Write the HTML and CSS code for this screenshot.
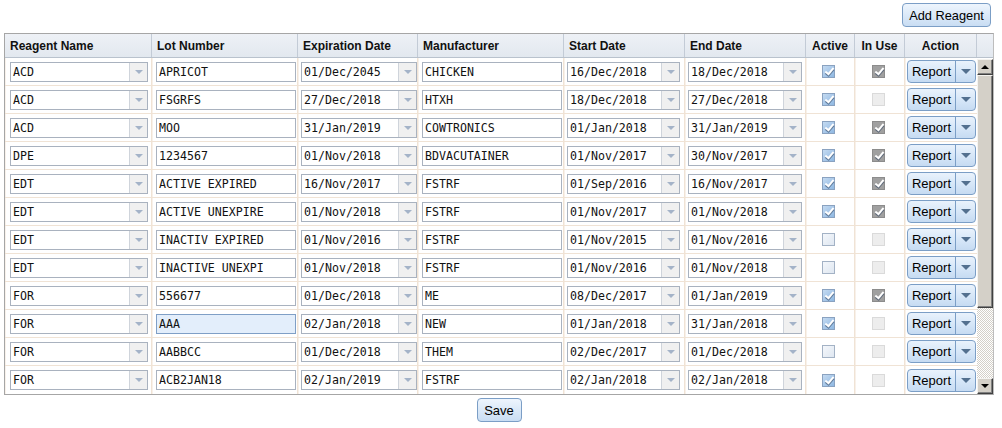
FILE: index.html
```html
<!DOCTYPE html>
<html lang="en">
<head>
  <meta charset="UTF-8">
  <title>Reagents</title>
  <link rel="stylesheet" href="styles.css">
</head>
<body>
  <div class="page">
    <div class="toolbar">
      <button class="btn">Add Reagent</button>
    </div>

    <div class="grid">
      <div class="grid-head">
        <div class="hcell">Reagent Name</div>
        <div class="hcell">Lot Number</div>
        <div class="hcell">Expiration Date</div>
        <div class="hcell">Manufacturer</div>
        <div class="hcell">Start Date</div>
        <div class="hcell">End Date</div>
        <div class="hcell center">Active</div>
        <div class="hcell center">In Use</div>
        <div class="hcell center">Action</div>
        <div class="hcell last"></div>
      </div>

      <div class="grid-body">
        <div class="rows">
          <div class="row">
            <div class="cell c1"><div class="combo"><span class="combo-text">ACD</span><span class="combo-btn"></span></div></div>
            <div class="cell c2"><div class="field">APRICOT</div></div>
            <div class="cell c3"><div class="combo"><span class="combo-text">01/Dec/2045</span><span class="combo-btn"></span></div></div>
            <div class="cell c4"><div class="field">CHICKEN</div></div>
            <div class="cell c5"><div class="combo"><span class="combo-text">16/Dec/2018</span><span class="combo-btn"></span></div></div>
            <div class="cell c6"><div class="combo"><span class="combo-text">18/Dec/2018</span><span class="combo-btn"></span></div></div>
            <div class="cell ccheck"><span class="check on"></span></div>
            <div class="cell ccheck"><span class="check locked on"></span></div>
            <div class="cell caction"><div class="split"><span class="split-main">Report</span><span class="split-arrow"></span></div></div>
          </div>
          <div class="row">
            <div class="cell c1"><div class="combo"><span class="combo-text">ACD</span><span class="combo-btn"></span></div></div>
            <div class="cell c2"><div class="field">FSGRFS</div></div>
            <div class="cell c3"><div class="combo"><span class="combo-text">27/Dec/2018</span><span class="combo-btn"></span></div></div>
            <div class="cell c4"><div class="field">HTXH</div></div>
            <div class="cell c5"><div class="combo"><span class="combo-text">18/Dec/2018</span><span class="combo-btn"></span></div></div>
            <div class="cell c6"><div class="combo"><span class="combo-text">27/Dec/2018</span><span class="combo-btn"></span></div></div>
            <div class="cell ccheck"><span class="check on"></span></div>
            <div class="cell ccheck"><span class="check locked"></span></div>
            <div class="cell caction"><div class="split"><span class="split-main">Report</span><span class="split-arrow"></span></div></div>
          </div>
          <div class="row">
            <div class="cell c1"><div class="combo"><span class="combo-text">ACD</span><span class="combo-btn"></span></div></div>
            <div class="cell c2"><div class="field">MOO</div></div>
            <div class="cell c3"><div class="combo"><span class="combo-text">31/Jan/2019</span><span class="combo-btn"></span></div></div>
            <div class="cell c4"><div class="field">COWTRONICS</div></div>
            <div class="cell c5"><div class="combo"><span class="combo-text">01/Jan/2018</span><span class="combo-btn"></span></div></div>
            <div class="cell c6"><div class="combo"><span class="combo-text">31/Jan/2019</span><span class="combo-btn"></span></div></div>
            <div class="cell ccheck"><span class="check on"></span></div>
            <div class="cell ccheck"><span class="check locked on"></span></div>
            <div class="cell caction"><div class="split"><span class="split-main">Report</span><span class="split-arrow"></span></div></div>
          </div>
          <div class="row">
            <div class="cell c1"><div class="combo"><span class="combo-text">DPE</span><span class="combo-btn"></span></div></div>
            <div class="cell c2"><div class="field">1234567</div></div>
            <div class="cell c3"><div class="combo"><span class="combo-text">01/Nov/2018</span><span class="combo-btn"></span></div></div>
            <div class="cell c4"><div class="field">BDVACUTAINER</div></div>
            <div class="cell c5"><div class="combo"><span class="combo-text">01/Nov/2017</span><span class="combo-btn"></span></div></div>
            <div class="cell c6"><div class="combo"><span class="combo-text">30/Nov/2017</span><span class="combo-btn"></span></div></div>
            <div class="cell ccheck"><span class="check on"></span></div>
            <div class="cell ccheck"><span class="check locked on"></span></div>
            <div class="cell caction"><div class="split"><span class="split-main">Report</span><span class="split-arrow"></span></div></div>
          </div>
          <div class="row">
            <div class="cell c1"><div class="combo"><span class="combo-text">EDT</span><span class="combo-btn"></span></div></div>
            <div class="cell c2"><div class="field">ACTIVE EXPIRED</div></div>
            <div class="cell c3"><div class="combo"><span class="combo-text">16/Nov/2017</span><span class="combo-btn"></span></div></div>
            <div class="cell c4"><div class="field">FSTRF</div></div>
            <div class="cell c5"><div class="combo"><span class="combo-text">01/Sep/2016</span><span class="combo-btn"></span></div></div>
            <div class="cell c6"><div class="combo"><span class="combo-text">16/Nov/2017</span><span class="combo-btn"></span></div></div>
            <div class="cell ccheck"><span class="check on"></span></div>
            <div class="cell ccheck"><span class="check locked on"></span></div>
            <div class="cell caction"><div class="split"><span class="split-main">Report</span><span class="split-arrow"></span></div></div>
          </div>
          <div class="row">
            <div class="cell c1"><div class="combo"><span class="combo-text">EDT</span><span class="combo-btn"></span></div></div>
            <div class="cell c2"><div class="field">ACTIVE UNEXPIRE</div></div>
            <div class="cell c3"><div class="combo"><span class="combo-text">01/Nov/2018</span><span class="combo-btn"></span></div></div>
            <div class="cell c4"><div class="field">FSTRF</div></div>
            <div class="cell c5"><div class="combo"><span class="combo-text">01/Nov/2017</span><span class="combo-btn"></span></div></div>
            <div class="cell c6"><div class="combo"><span class="combo-text">01/Nov/2018</span><span class="combo-btn"></span></div></div>
            <div class="cell ccheck"><span class="check on"></span></div>
            <div class="cell ccheck"><span class="check locked on"></span></div>
            <div class="cell caction"><div class="split"><span class="split-main">Report</span><span class="split-arrow"></span></div></div>
          </div>
          <div class="row">
            <div class="cell c1"><div class="combo"><span class="combo-text">EDT</span><span class="combo-btn"></span></div></div>
            <div class="cell c2"><div class="field">INACTIV EXPIRED</div></div>
            <div class="cell c3"><div class="combo"><span class="combo-text">01/Nov/2016</span><span class="combo-btn"></span></div></div>
            <div class="cell c4"><div class="field">FSTRF</div></div>
            <div class="cell c5"><div class="combo"><span class="combo-text">01/Nov/2015</span><span class="combo-btn"></span></div></div>
            <div class="cell c6"><div class="combo"><span class="combo-text">01/Nov/2016</span><span class="combo-btn"></span></div></div>
            <div class="cell ccheck"><span class="check"></span></div>
            <div class="cell ccheck"><span class="check locked"></span></div>
            <div class="cell caction"><div class="split"><span class="split-main">Report</span><span class="split-arrow"></span></div></div>
          </div>
          <div class="row">
            <div class="cell c1"><div class="combo"><span class="combo-text">EDT</span><span class="combo-btn"></span></div></div>
            <div class="cell c2"><div class="field">INACTIVE UNEXPI</div></div>
            <div class="cell c3"><div class="combo"><span class="combo-text">01/Nov/2018</span><span class="combo-btn"></span></div></div>
            <div class="cell c4"><div class="field">FSTRF</div></div>
            <div class="cell c5"><div class="combo"><span class="combo-text">01/Nov/2016</span><span class="combo-btn"></span></div></div>
            <div class="cell c6"><div class="combo"><span class="combo-text">01/Nov/2018</span><span class="combo-btn"></span></div></div>
            <div class="cell ccheck"><span class="check"></span></div>
            <div class="cell ccheck"><span class="check locked"></span></div>
            <div class="cell caction"><div class="split"><span class="split-main">Report</span><span class="split-arrow"></span></div></div>
          </div>
          <div class="row">
            <div class="cell c1"><div class="combo"><span class="combo-text">FOR</span><span class="combo-btn"></span></div></div>
            <div class="cell c2"><div class="field">556677</div></div>
            <div class="cell c3"><div class="combo"><span class="combo-text">01/Dec/2018</span><span class="combo-btn"></span></div></div>
            <div class="cell c4"><div class="field">ME</div></div>
            <div class="cell c5"><div class="combo"><span class="combo-text">08/Dec/2017</span><span class="combo-btn"></span></div></div>
            <div class="cell c6"><div class="combo"><span class="combo-text">01/Jan/2019</span><span class="combo-btn"></span></div></div>
            <div class="cell ccheck"><span class="check on"></span></div>
            <div class="cell ccheck"><span class="check locked on"></span></div>
            <div class="cell caction"><div class="split"><span class="split-main">Report</span><span class="split-arrow"></span></div></div>
          </div>
          <div class="row">
            <div class="cell c1"><div class="combo"><span class="combo-text">FOR</span><span class="combo-btn"></span></div></div>
            <div class="cell c2"><div class="field focused">AAA</div></div>
            <div class="cell c3"><div class="combo"><span class="combo-text">02/Jan/2018</span><span class="combo-btn"></span></div></div>
            <div class="cell c4"><div class="field">NEW</div></div>
            <div class="cell c5"><div class="combo"><span class="combo-text">01/Jan/2018</span><span class="combo-btn"></span></div></div>
            <div class="cell c6"><div class="combo"><span class="combo-text">31/Jan/2018</span><span class="combo-btn"></span></div></div>
            <div class="cell ccheck"><span class="check on"></span></div>
            <div class="cell ccheck"><span class="check locked"></span></div>
            <div class="cell caction"><div class="split"><span class="split-main">Report</span><span class="split-arrow"></span></div></div>
          </div>
          <div class="row">
            <div class="cell c1"><div class="combo"><span class="combo-text">FOR</span><span class="combo-btn"></span></div></div>
            <div class="cell c2"><div class="field">AABBCC</div></div>
            <div class="cell c3"><div class="combo"><span class="combo-text">01/Dec/2018</span><span class="combo-btn"></span></div></div>
            <div class="cell c4"><div class="field">THEM</div></div>
            <div class="cell c5"><div class="combo"><span class="combo-text">02/Dec/2017</span><span class="combo-btn"></span></div></div>
            <div class="cell c6"><div class="combo"><span class="combo-text">01/Dec/2018</span><span class="combo-btn"></span></div></div>
            <div class="cell ccheck"><span class="check"></span></div>
            <div class="cell ccheck"><span class="check locked"></span></div>
            <div class="cell caction"><div class="split"><span class="split-main">Report</span><span class="split-arrow"></span></div></div>
          </div>
          <div class="row">
            <div class="cell c1"><div class="combo"><span class="combo-text">FOR</span><span class="combo-btn"></span></div></div>
            <div class="cell c2"><div class="field">ACB2JAN18</div></div>
            <div class="cell c3"><div class="combo"><span class="combo-text">02/Jan/2019</span><span class="combo-btn"></span></div></div>
            <div class="cell c4"><div class="field">FSTRF</div></div>
            <div class="cell c5"><div class="combo"><span class="combo-text">02/Jan/2018</span><span class="combo-btn"></span></div></div>
            <div class="cell c6"><div class="combo"><span class="combo-text">02/Jan/2018</span><span class="combo-btn"></span></div></div>
            <div class="cell ccheck"><span class="check on"></span></div>
            <div class="cell ccheck"><span class="check locked"></span></div>
            <div class="cell caction"><div class="split"><span class="split-main">Report</span><span class="split-arrow"></span></div></div>
          </div>
        </div>

        <div class="vscroll">
          <div class="sb-btn up"></div>
          <div class="sb-thumb"></div>
          <div class="sb-track"></div>
          <div class="sb-btn down"></div>
        </div>
      </div>
    </div>

    <div class="footer">
      <button class="btn">Save</button>
    </div>
  </div>
</body>
</html>
```

FILE: styles.css
```css
:root {
  --head-border: #c3cbd6;
  --grid-border: #a6a6a6;
  --cell-line: #f0e3d5;
  --field-border: #a9b2bf;
  --btn-border: #7b9ec6;
  --text: #000000;
}

* {
  margin: 0;
  padding: 0;
  box-sizing: border-box;
}

body {
  font-family: "Liberation Sans", Arial, sans-serif;
  background: #ffffff;
  color: var(--text);
}

.page {
  width: 1002px;
  padding: 3px 8px 0 4px;
}

.toolbar {
  display: flex;
  justify-content: flex-end;
  padding-right: 3px;
  margin-bottom: 6px;
}

.btn {
  font-family: "Liberation Sans", Arial, sans-serif;
  font-size: 13px;
  color: #000;
  height: 24px;
  padding: 0 6px;
  border: 1px solid var(--btn-border);
  border-radius: 4px;
  background: linear-gradient(#eef5fd 0%, #dbe9f8 50%, #c9ddf3 100%);
  cursor: pointer;
}

.toolbar .btn {
  width: 89px;
  font-size: 12.8px;
}

/* grid */
.grid {
  width: 990px;
  border: 1px solid var(--grid-border);
  border-right-color: #bdbdbd;
}

.grid-head {
  display: grid;
  grid-template-columns: 147px 146px 120px 146px 121px 121px 49px 50px 72px 16px;
  height: 24px;
  background: linear-gradient(#eef1f6 0%, #e2e8ef 100%);
  border-bottom: 1px solid #b9c2cd;
}

.hcell {
  font-size: 12px;
  font-weight: bold;
  color: #111;
  padding: 0 5px;
  display: flex;
  align-items: center;
  border-right: 1px solid var(--head-border);
  white-space: nowrap;
}

.hcell.center {
  justify-content: center;
}

.hcell.last {
  border-right: none;
}

.grid-body {
  display: flex;
}

.rows {
  width: 972px;
}

.row {
  display: grid;
  grid-template-columns: 147px 146px 120px 146px 121px 121px 49px 50px 72px;
  height: 28px;
  border-bottom: 1px solid var(--cell-line);
}

.row:last-child {
  border-bottom: none;
}

.cell {
  display: flex;
  align-items: center;
  border-right: 1px solid var(--cell-line);
  border-left: 1px solid #f8f1ea;
}

.c1 { padding: 0 3px 0 4px; }
.c2 { padding: 0 1px 0 3px; }
.c3 { padding: 0 0 0 2px; }
.c4 { padding: 0 1px 0 3px; }
.c5 { padding: 0 4px 0 2px; }
.c6 { padding: 0 3px 0 2px; }

.ccheck {
  justify-content: center;
  padding-right: 4px;
}

.caction {
  padding-left: 1px;
  border-right: none;
}

/* inputs */
.field,
.combo {
  width: 100%;
  height: 20px;
  border: 1px solid var(--field-border);
  background: #fff;
  font-family: "DejaVu Sans Mono", "Liberation Mono", monospace;
  font-size: 11.6px;
  color: #111;
  white-space: nowrap;
  overflow: hidden;
}

.field {
  padding: 0 2px;
  line-height: 18px;
}

.field.focused {
  background: #e3eefb;
  border-color: #7f9fc6;
}

.combo {
  display: flex;
}

.combo-text {
  flex: 1;
  padding: 0 2px;
  line-height: 18px;
}

.combo-btn {
  width: 18px;
  border-left: 1px solid #cfd4db;
  background: #f0f0f0;
  display: flex;
  align-items: center;
  justify-content: center;
}

.combo-btn::after {
  content: "";
  border-left: 4px solid transparent;
  border-right: 4px solid transparent;
  border-top: 4px solid #a4b3c8;
}

/* checkboxes */
.check {
  position: relative;
  width: 13px;
  height: 13px;
  border: 1px solid #a3b2c5;
  background: linear-gradient(135deg, #f4f7fb 0%, #dfe7f1 100%);
}

.check.on {
  border-color: #8aa2c0;
  background: linear-gradient(135deg, #c4daf1 0%, #8fb8e2 100%);
}

.check.locked {
  border-color: #dadada;
  background: #ededed;
}

.check.locked.on {
  border-color: #8c8c8c;
  background: #a0a0a0;
}

.check.on::after {
  content: "";
  position: absolute;
  left: 4px;
  top: 0;
  width: 3px;
  height: 7px;
  border-right: 2px solid #fff;
  border-bottom: 2px solid #fff;
  transform: rotate(40deg);
  filter: drop-shadow(1px 1px 0 rgba(40, 60, 90, 0.55));
}

/* split button */
.split {
  display: flex;
  width: 69px;
  height: 23px;
  border: 1px solid var(--btn-border);
  border-radius: 4px;
  background: linear-gradient(#e9f2fc 0%, #d7e7f8 50%, #c6dbf2 100%);
  font-size: 13px;
  color: #000;
}

.split-main {
  width: 48px;
  display: flex;
  align-items: center;
  justify-content: center;
  border-right: 1px solid var(--btn-border);
}

.split-arrow {
  flex: 1;
  display: flex;
  align-items: center;
  justify-content: center;
}

.split-arrow::after {
  content: "";
  border-left: 5px solid transparent;
  border-right: 5px solid transparent;
  border-top: 5px solid #53708f;
}

/* scrollbar */
.vscroll {
  width: 16px;
  display: flex;
  flex-direction: column;
  padding-top: 1px;
}

.sb-btn,
.sb-thumb {
  background: #d4d0c8;
  border: 1px solid;
  border-color: #f4f3f0 #404040 #404040 #f4f3f0;
  box-shadow: inset -1px -1px 0 #808080;
}

.sb-btn {
  height: 16px;
  display: flex;
  align-items: center;
  justify-content: center;
}

.sb-btn.up::after {
  content: "";
  border-left: 4px solid transparent;
  border-right: 4px solid transparent;
  border-bottom: 4px solid #000;
}

.sb-btn.down::after {
  content: "";
  border-left: 4px solid transparent;
  border-right: 4px solid transparent;
  border-top: 4px solid #000;
}

.sb-thumb {
  height: 233px;
}

.sb-track {
  flex: 1;
  background: repeating-conic-gradient(#d4d0c8 0% 25%, #ffffff 0% 50%) 0 0 / 2px 2px;
}

.footer {
  display: flex;
  justify-content: center;
  padding-top: 3px;
}

.footer .btn {
  width: 45px;
  padding: 0;
}
```
